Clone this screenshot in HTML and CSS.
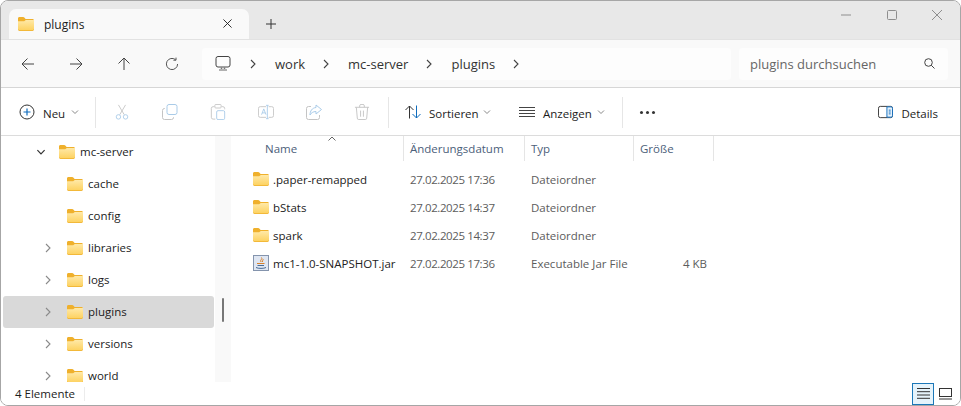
FILE: index.html
```html
<!DOCTYPE html>
<html lang="de">
<head>
    <meta charset="UTF-8">
    <title>plugins</title>
    <link rel="stylesheet" href="styles.css">
</head>
<body>
    <svg class="defs" width="0" height="0">
        <defs>
            <linearGradient id="folder-fill" x1="0" y1="0" x2="0" y2="1">
                <stop offset="0" stop-color="#ffe9a8"/>
                <stop offset="1" stop-color="#fdd261"/>
            </linearGradient>
            <symbol id="folder" viewBox="0 0 16 14">
                <path d="M0 1.5C0 .7.6 0 1.4 0h3.8c.5 0 .8.2 1.1.5L7.6 2H14.5c.8 0 1.5.7 1.5 1.5V12c0 1-.7 2-1.6 2H1.6C.7 14 0 13 0 12z" fill="#efb02c"/>
                <path d="M0 4.2h6.2L7.8 3H16v8.6c0 1-.7 1.6-1.6 1.6H1.6C.7 13.2 0 12.6 0 11.6z" fill="url(#folder-fill)"/>
            </symbol>
            <symbol id="chev-r" viewBox="0 0 10 10">
                <path d="M3 1l4 4-4 4" fill="none" stroke="currentColor" stroke-width="1.1"/>
            </symbol>
            <symbol id="chev-d" viewBox="0 0 10 10">
                <path d="M2 3.5l3 3 3-3" fill="none" stroke="currentColor" stroke-width="1"/>
            </symbol>
        </defs>
    </svg>

    <div class="window">
        <!-- Tabs -->
        <div class="tabbar">
            <div class="tab">
                <svg class="tab-folder"><use href="#folder"/></svg>
                <span class="tab-title">plugins</span>
                <svg class="tab-close" viewBox="0 0 10 10"><path d="M.5.5l9 9M9.5.5l-9 9" stroke="#1c1c1c" fill="none"/></svg>
            </div>
            <svg class="tab-plus" viewBox="0 0 10 10"><path d="M5 0v10M0 5h10" stroke="#333" fill="none"/></svg>
            <div class="win-controls">
                <svg class="win-icon" viewBox="0 0 10 10"><path d="M0 5h10" stroke="#8e8e8e" fill="none"/></svg>
                <svg class="win-icon" viewBox="0 0 10 10"><rect x=".5" y=".5" width="9" height="9" rx="1" stroke="#8e8e8e" fill="none"/></svg>
                <svg class="win-icon" viewBox="0 0 10 10"><path d="M0 0l10 10M10 0L0 10" stroke="#8e8e8e" fill="none"/></svg>
            </div>
        </div>

        <!-- Navigation -->
        <div class="navbar">
            <div class="nav-buttons">
                <svg class="nav-icon" viewBox="0 0 14 14"><path d="M13 7H1M6.5 1.5L1 7l5.5 5.5" stroke="#444" fill="none"/></svg>
                <svg class="nav-icon" viewBox="0 0 14 14"><path d="M1 7h12M7.5 1.5L13 7l-5.5 5.5" stroke="#444" fill="none"/></svg>
                <svg class="nav-icon" viewBox="0 0 14 14"><path d="M7 13V1M1.5 6.5L7 1l5.5 5.5" stroke="#444" fill="none"/></svg>
                <svg class="nav-icon" viewBox="0 0 14 14"><path d="M12.6 7A5.6 5.6 0 1 1 10.6 2.7M11 .6v2.600H8.400" stroke="#555" fill="none"/></svg>
            </div>
            <div class="address">
                <svg class="pc-icon" viewBox="0 0 16 15"><rect x="1" y=".5" width="14" height="10.500" rx="2" fill="none" stroke="#444"/><path d="M6.500 11.500v1.500M9.500 11.500v1.500" stroke="#777" stroke-width="1.500" fill="none"/><path d="M4 14h8" stroke="#666" fill="none"/></svg>
                <svg class="crumb-chev"><use href="#chev-r"/></svg>
                <span class="crumb">work</span>
                <svg class="crumb-chev"><use href="#chev-r"/></svg>
                <span class="crumb">mc-server</span>
                <svg class="crumb-chev"><use href="#chev-r"/></svg>
                <span class="crumb">plugins</span>
                <svg class="crumb-chev"><use href="#chev-r"/></svg>
            </div>
            <div class="search">
                <span class="search-text">plugins durchsuchen</span>
                <svg class="search-icon" viewBox="0 0 11 11"><circle cx="4.500" cy="4.500" r="3.800" fill="none" stroke="#444"/><path d="M7.200 7.200L10.500 10.500" stroke="#444" fill="none"/></svg>
            </div>
        </div>

        <!-- Toolbar -->
        <div class="toolbar">
            <div class="tool tool-new">
                <svg class="tool-icon" viewBox="0 0 16 16"><circle cx="8" cy="8" r="7" fill="none" stroke="#333"/><path d="M8 4.500v7M4.500 8h7" stroke="#0f6cbd" fill="none" stroke-width="1.200"/></svg>
                <span>Neu</span>
                <svg class="tool-chev"><use href="#chev-d"/></svg>
            </div>
            <div class="tool-sep"></div>
            <div class="tool-group">
                <svg class="tool-icon" viewBox="0 0 16 18"><path d="M4 1l6.500 11M12 1L5.500 12" stroke="#c4c4c4" fill="none"/><circle cx="4" cy="14.500" r="2.500" fill="none" stroke="#a9cbe8"/><circle cx="12" cy="14.500" r="2.500" fill="none" stroke="#a9cbe8"/></svg>
                <svg class="tool-icon" viewBox="0 0 16 16"><rect x="5" y=".5" width="10" height="10" rx="2" fill="none" stroke="#a9cbe8"/><path d="M3 4.500H2.500a2 2 0 0 0-2 2v7a2 2 0 0 0 2 2h7a2 2 0 0 0 2-2V13" fill="none" stroke="#c4c4c4"/></svg>
                <svg class="tool-icon" viewBox="0 0 16 18"><path d="M4 3H2.500a2 2 0 0 0-2 2v10a2 2 0 0 0 2 2H5M12 3h1.500a2 2 0 0 1 2 2v1" fill="none" stroke="#c4c4c4"/><rect x="4.500" y=".5" width="7" height="4" rx="1" fill="#fff" stroke="#c4c4c4"/><rect x="6.500" y="7.500" width="9" height="10" rx="1.500" fill="none" stroke="#a9cbe8"/></svg>
                <svg class="tool-icon" viewBox="0 0 18 16"><path d="M9 2H2.500a2 2 0 0 0-2 2v8a2 2 0 0 0 2 2H9M12 2h3.500a2 2 0 0 1 2 2v8a2 2 0 0 1-2 2H12" fill="none" stroke="#c4c4c4"/><path d="M4 11l2.500-6.500L9 11M4.800 9h3.400M10.500.5v15M9 .5h3M9 15.500h3" fill="none" stroke="#a9cbe8"/></svg>
                <svg class="tool-icon" viewBox="0 0 16 16"><path d="M5 2.500H2.500a2 2 0 0 0-2 2v9a2 2 0 0 0 2 2h9a2 2 0 0 0 2-2V11" fill="none" stroke="#c4c4c4"/><path d="M10 1l5.500 4.500L10 10V7.500C7 7.500 5 9 4 11c0-4 2-7 6-7.500z" fill="none" stroke="#a9cbe8"/></svg>
                <svg class="tool-icon" viewBox="0 0 16 17"><path d="M.5 3.500h15M5.500 3.500V2a1.500 1.500 0 0 1 1.500-1.500h2A1.500 1.500 0 0 1 10.500 2v1.500M2 3.500l1 11.500a1.500 1.500 0 0 0 1.500 1.500h7A1.500 1.500 0 0 0 13 15l1-11.500M6.500 7v6.500M9.500 7v6.500" fill="none" stroke="#c4c4c4"/></svg>
            </div>
            <div class="tool-sep"></div>
            <div class="tool tool-sort">
                <svg class="tool-icon" viewBox="0 0 16 14"><path d="M4.500 13.500V1M.5 5l4-4 4 4" fill="none" stroke="#333"/><path d="M11.500.5V13M7.500 9l4 4 4-4" fill="none" stroke="#0f6cbd"/></svg>
                <span>Sortieren</span>
                <svg class="tool-chev"><use href="#chev-d"/></svg>
            </div>
            <div class="tool tool-view">
                <svg class="tool-icon" viewBox="0 0 16 16"><path d="M0 3.500h16M0 6.500h16M0 9.500h16M0 12.500h16" stroke="#444" fill="none"/></svg>
                <span>Anzeigen</span>
                <svg class="tool-chev"><use href="#chev-d"/></svg>
            </div>
            <div class="tool-sep"></div>
            <div class="tool-more"><i></i><i></i><i></i></div>
            <div class="tool tool-details">
                <svg class="tool-icon" viewBox="0 0 16 13"><rect x=".5" y=".5" width="15" height="12" rx="2" fill="none" stroke="#333"/><path d="M9.500 1v11h4.500a1.500 1.500 0 0 0 1.500-1.500v-8A1.500 1.500 0 0 0 14 1z" fill="#e4f0fa" stroke="#0f6cbd"/><path d="M11.500 4.500h2M11.500 6.500h2M11.500 8.500h2" stroke="#0f6cbd" fill="none"/></svg>
                <span>Details</span>
            </div>
        </div>

        <!-- Tree and file list -->
        <div class="content">
            <div class="tree">
                <div class="tree-row level-1">
                    <svg class="tree-chev open"><use href="#chev-d"/></svg>
                    <svg class="folder"><use href="#folder"/></svg>
                    <span>mc-server</span>
                </div>
                <div class="tree-row">
                    <span class="tree-chev"></span>
                    <svg class="folder"><use href="#folder"/></svg>
                    <span>cache</span>
                </div>
                <div class="tree-row">
                    <span class="tree-chev"></span>
                    <svg class="folder"><use href="#folder"/></svg>
                    <span>config</span>
                </div>
                <div class="tree-row">
                    <svg class="tree-chev"><use href="#chev-r"/></svg>
                    <svg class="folder"><use href="#folder"/></svg>
                    <span>libraries</span>
                </div>
                <div class="tree-row">
                    <svg class="tree-chev"><use href="#chev-r"/></svg>
                    <svg class="folder"><use href="#folder"/></svg>
                    <span>logs</span>
                </div>
                <div class="tree-row selected">
                    <svg class="tree-chev"><use href="#chev-r"/></svg>
                    <svg class="folder"><use href="#folder"/></svg>
                    <span>plugins</span>
                </div>
                <div class="tree-row">
                    <svg class="tree-chev"><use href="#chev-r"/></svg>
                    <svg class="folder"><use href="#folder"/></svg>
                    <span>versions</span>
                </div>
                <div class="tree-row">
                    <svg class="tree-chev"><use href="#chev-r"/></svg>
                    <svg class="folder"><use href="#folder"/></svg>
                    <span>world</span>
                </div>
            </div>
            <div class="tree-scroll"><div class="tree-thumb"></div></div>

            <div class="files">
                <div class="file-head">
                    <div class="head-cell head-name">Name<svg class="sort-caret" viewBox="0 0 8 5"><path d="M.5 4.500L4 1l3.500 3.500" fill="none" stroke="#666"/></svg></div>
                    <div class="head-cell">Änderungsdatum</div>
                    <div class="head-cell">Typ</div>
                    <div class="head-cell">Größe</div>
                </div>
                <div class="file-row">
                    <div class="file-name"><svg class="folder"><use href="#folder"/></svg>.paper-remapped</div>
                    <div class="file-meta file-date">27.02.2025 17:36</div>
                    <div class="file-meta">Dateiordner</div>
                    <div class="file-size"></div>
                </div>
                <div class="file-row">
                    <div class="file-name"><svg class="folder"><use href="#folder"/></svg>bStats</div>
                    <div class="file-meta file-date">27.02.2025 14:37</div>
                    <div class="file-meta">Dateiordner</div>
                    <div class="file-size"></div>
                </div>
                <div class="file-row">
                    <div class="file-name"><svg class="folder"><use href="#folder"/></svg>spark</div>
                    <div class="file-meta file-date">27.02.2025 14:37</div>
                    <div class="file-meta">Dateiordner</div>
                    <div class="file-size"></div>
                </div>
                <div class="file-row">
                    <div class="file-name">
                        <svg class="jar-icon" viewBox="0 0 16 16">
                            <rect x=".5" y=".5" width="15" height="15" fill="#dfe6f2" stroke="#8494ad"/>
                            <path d="M8.500 2.500C10 4 6.500 5 8 7M10 4c.6 1-1 1.500-.5 3" fill="none" stroke="#d9822b"/>
                            <path d="M4 8.500h7.500" fill="none" stroke="#d9822b"/>
                            <path d="M4.500 10.500h6.500M3 12.500c2 1.200 8 1.200 10 0" fill="none" stroke="#4a6d96"/>
                        </svg>
                        mc1-1.0-SNAPSHOT.jar
                    </div>
                    <div class="file-meta file-date">27.02.2025 17:36</div>
                    <div class="file-meta">Executable Jar File</div>
                    <div class="file-size">4 KB</div>
                </div>
            </div>
        </div>

        <!-- Status -->
        <div class="statusbar">
            <span class="status-text">4 Elemente</span>
            <div class="status-sep"></div>
            <div class="view-switch">
                <div class="view-btn active">
                    <svg viewBox="0 0 13 11" width="13" height="11"><path d="M0 .5h13M0 3.700h13M0 7h13M0 10.300h13" stroke="#333" fill="none"/></svg>
                </div>
                <div class="view-btn">
                    <svg viewBox="0 0 13 12" width="13" height="12"><rect x=".5" y=".5" width="12" height="8" fill="none" stroke="#333"/><path d="M0 11h13" stroke="#333" fill="none"/></svg>
                </div>
            </div>
        </div>
    </div>
</body>
</html>
```

FILE: styles.css
```css
html, body {
    margin: 0;
    padding: 0;
    background: #fff;
}

body {
    font-family: 'Open Sans', 'Noto Sans', sans-serif;
    font-size: 11.5px;
    color: #1c1c1c;
    overflow: hidden;
}

.defs {
    position: absolute;
}

.window {
    box-sizing: border-box;
    width: 961px;
    height: 406px;
    border: 1px solid #a6a6a6;
    border-radius: 8px;
    display: flex;
    flex-direction: column;
    overflow: hidden;
    background: #fff;
}

/* Tabs */
.tabbar {
    height: 38px;
    flex: none;
    background: #e8e8e8;
    display: flex;
    align-items: flex-end;
    padding-left: 8px;
}

.tab {
    box-sizing: border-box;
    width: 240px;
    height: 30px;
    background: #f9f9f9;
    border-radius: 7px 7px 0 0;
    display: flex;
    align-items: center;
    padding: 0 17px 0 9px;
    font-size: 12px;
}

.tab-folder {
    width: 16px;
    height: 14px;
    margin-right: 10px;
    margin-bottom: 1px;
}

.tab-title {
    flex: 1;
}

.tab-close {
    width: 9px;
    height: 9px;
    margin-bottom: 1px;
}

.tab-plus {
    width: 10px;
    height: 10px;
    margin: 0 0 10px 17px;
}

.win-controls {
    margin-left: auto;
    align-self: stretch;
    display: flex;
    align-items: center;
    gap: 35.5px;
    padding: 0 18px 10px 0;
}

.win-icon {
    width: 10px;
    height: 10px;
}

/* Navigation */
.navbar {
    height: 49px;
    flex: none;
    box-sizing: border-box;
    background: #f9f9f9;
    border-top: 1px solid #e2e2e2;
    border-bottom: 1px solid #d6d6d6;
    display: flex;
    align-items: center;
    padding-left: 20px;
}

.nav-buttons {
    display: flex;
    gap: 34px;
    width: 181px;
}

.nav-icon {
    width: 14px;
    height: 14px;
}

.address {
    box-sizing: border-box;
    width: 529px;
    height: 32px;
    background: #fdfdfd;
    border-radius: 4px;
    display: flex;
    align-items: center;
    padding-left: 13px;
    font-size: 13px;
    color: #333;
}

.pc-icon {
    width: 16px;
    height: 15px;
    margin-right: 17px;
}

.crumb-chev {
    width: 10px;
    height: 10px;
    color: #444;
}

.crumb {
    margin: 0 16px 0 17px;
}

.search {
    box-sizing: border-box;
    width: 209px;
    height: 32px;
    margin-left: 8px;
    background: #fdfdfd;
    border-radius: 4px;
    display: flex;
    align-items: center;
    justify-content: space-between;
    padding: 0 13px 0 11px;
    font-size: 13px;
    color: #666;
}

.search-icon {
    width: 11px;
    height: 11px;
}

/* Toolbar */
.toolbar {
    height: 48px;
    flex: none;
    box-sizing: border-box;
    background: #fff;
    border-bottom: 1px solid #dcdcdc;
    display: flex;
    align-items: center;
    padding: 1px 0 0 18px;
}

.tool {
    display: flex;
    align-items: center;
}

.tool span {
    padding-top: 2px;
}

.tool-icon {
    width: 16px;
    height: 16px;
    flex: none;
}

.tool-chev {
    width: 10px;
    height: 10px;
    color: #888;
}

.tool-new {
    width: 76px;
}

.tool-new span {
    margin: 0 5px 0 8px;
}

.tool-sep {
    width: 1px;
    height: 31px;
    background: #e6e6e6;
    flex: none;
}

.tool-group {
    width: 292px;
    box-sizing: border-box;
    display: flex;
    gap: 32px;
    padding-left: 18px;
}

.tool-sort {
    margin-left: 16px;
    width: 98px;
}

.tool-sort span {
    margin: 0 3px 0 8px;
}

.tool-view {
    margin-left: 16px;
    width: 103px;
}

.tool-view span {
    margin: 0 4px 0 8px;
}

.tool-more {
    display: flex;
    gap: 3px;
    margin-left: 17px;
}

.tool-more i {
    width: 3px;
    height: 3px;
    border-radius: 50%;
    background: #333;
}

.tool-details {
    margin-left: auto;
    padding-right: 22px;
}

.tool-details .tool-icon {
    width: 15px;
}

.tool-details span {
    margin-left: 8px;
}

/* Tree */
.content {
    flex: 1;
    min-height: 0;
    display: flex;
}

.tree {
    width: 211px;
    flex: none;
    padding: 0 0 0 2px;
    overflow: hidden;
}

.tree-row {
    height: 32px;
    display: flex;
    align-items: center;
    padding-left: 40px;
    border-radius: 3px;
}

.tree-row span:last-child {
    padding-bottom: 2px;
}

.tree-row.level-1 {
    padding-left: 32px;
}

.tree-row.selected {
    background: #d9d9d9;
}

.tree-chev {
    width: 10px;
    height: 10px;
    flex: none;
    margin-right: 14px;
    color: #8a8a8a;
}

.tree-chev.open {
    color: #333;
    width: 12px;
    height: 12px;
    margin-right: 12px;
}

.folder {
    width: 16px;
    height: 14px;
    flex: none;
    margin-right: 5px;
}

.tree-scroll {
    width: 16px;
    flex: none;
    background: #f9f9f9;
    margin-left: 1px;
    display: flex;
    justify-content: center;
    padding-top: 162px;
    box-sizing: border-box;
}

.tree-thumb {
    width: 2px;
    height: 24px;
    background: #777;
    border-radius: 1px;
}

/* File list */
.files {
    flex: 1;
    min-width: 0;
    overflow: hidden;
}

.file-head {
    height: 25px;
    margin-bottom: 4px;
    display: grid;
    grid-template-columns: 173px 121px 109px 80px;
    color: #4c607a;
}

.head-cell {
    position: relative;
    border-right: 1px solid #e5e5e5;
    padding: 5px 0 0 6px;
}

.head-name {
    padding-left: 34px;
}

.sort-caret {
    position: absolute;
    left: 97px;
    top: 0;
    width: 8px;
    height: 5px;
}

.file-row {
    height: 28px;
    display: grid;
    grid-template-columns: 173px 121px 109px 80px;
    align-items: center;
}

.file-name {
    display: flex;
    align-items: center;
    padding-left: 22px;
    white-space: nowrap;
    overflow: hidden;
    color: #222;
}

.file-name .folder {
    margin-right: 4px;
}

.jar-icon {
    width: 16px;
    height: 16px;
    margin-right: 4px;
    flex: none;
}

.file-meta {
    padding-left: 6px;
    color: #5c5c5c;
    white-space: nowrap;
}

.file-date {
    letter-spacing: -0.4px;
}

.file-size {
    text-align: right;
    padding-right: 7px;
    color: #5c5c5c;
}

/* Status */
.statusbar {
    height: 23px;
    flex: none;
    display: flex;
    align-items: center;
    padding-left: 14px;
    background: #fff;
}

.status-sep {
    width: 1px;
    height: 14px;
    background: #ececec;
    margin-left: 9px;
}

.view-switch {
    margin-left: auto;
    display: flex;
    padding-right: 4px;
}

.view-btn {
    box-sizing: border-box;
    width: 22px;
    height: 22px;
    display: flex;
    align-items: center;
    justify-content: center;
}

.view-btn.active {
    background: #e5f3fb;
    border: 1px solid #1b77b8;
}
```
